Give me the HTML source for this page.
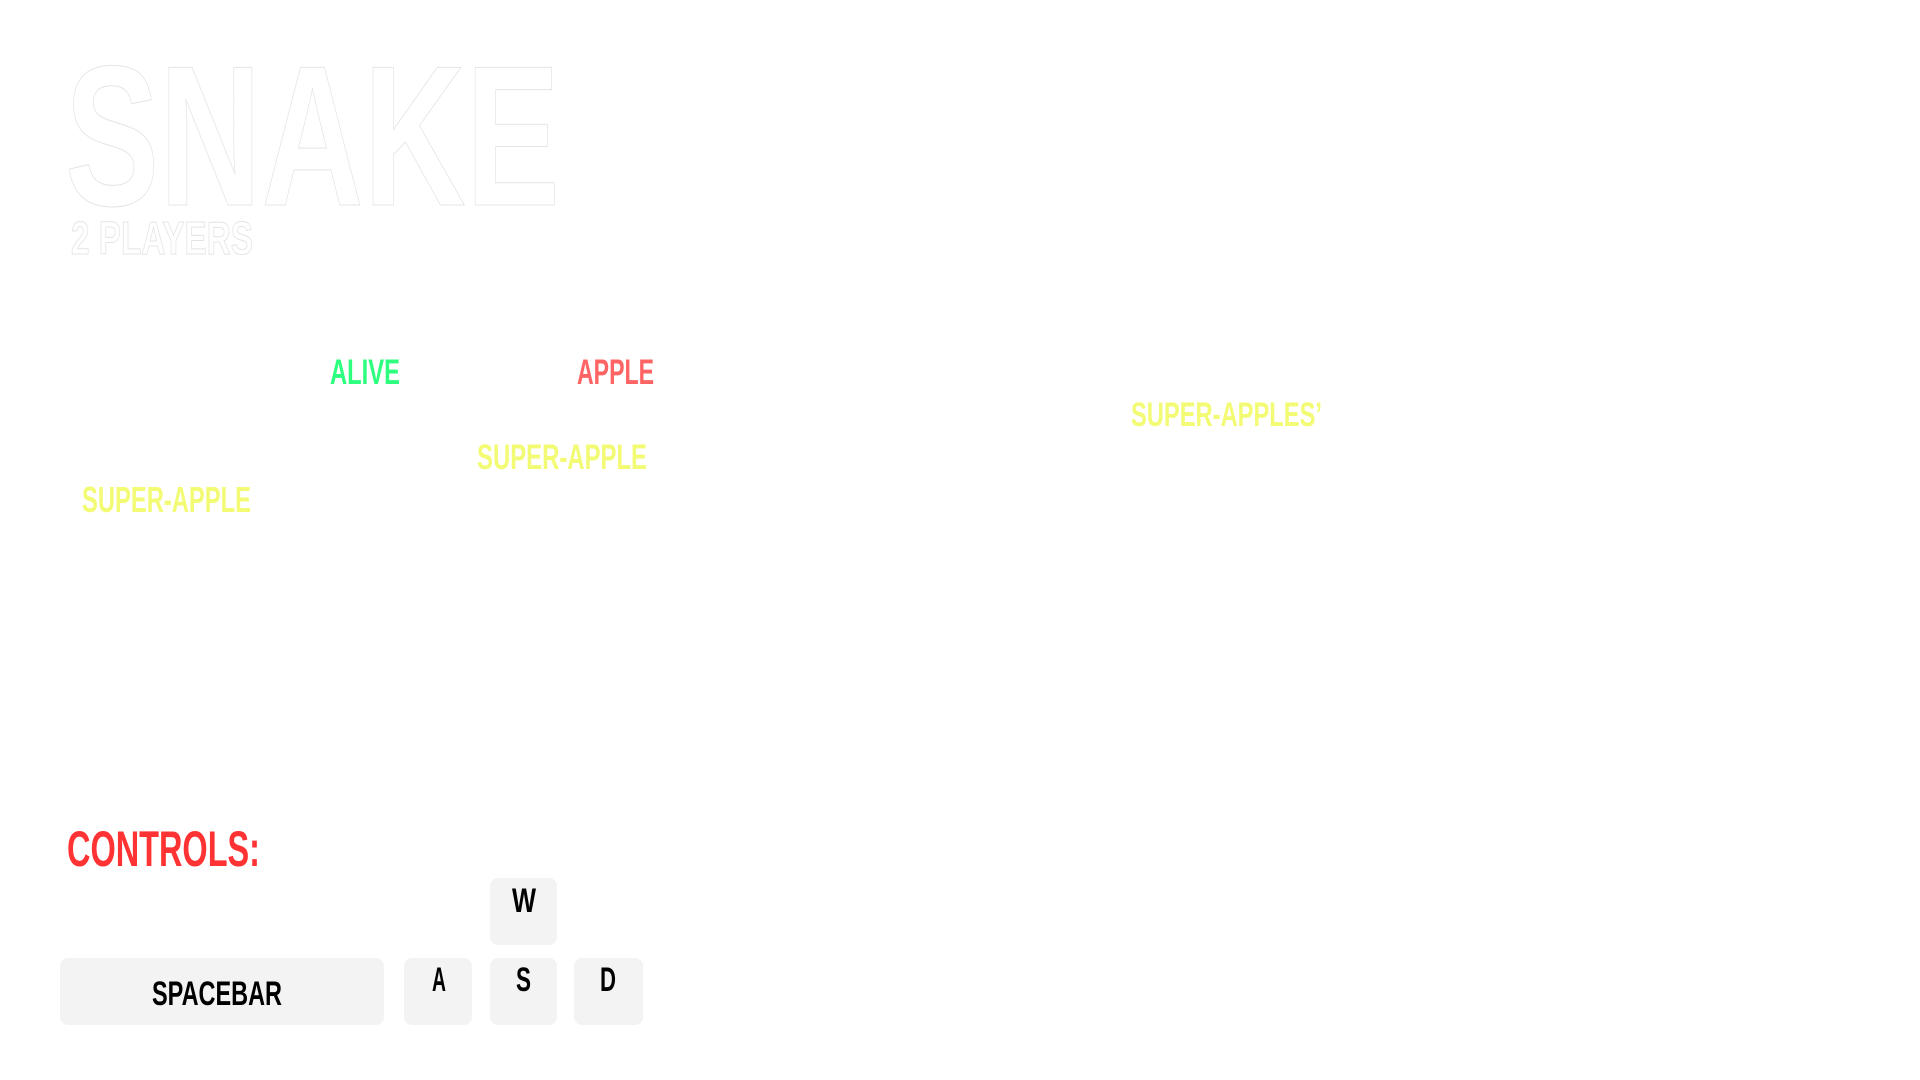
<!DOCTYPE html>
<html><head><meta charset="utf-8"><style>
html,body{margin:0;padding:0;background:#fff;width:1920px;height:1080px;overflow:hidden}
svg{display:block}
text{font-family:"Liberation Sans",sans-serif;font-weight:bold}
</style></head><body>
<svg width="1920" height="1080" viewBox="0 0 1920 1080">
<text x="65" y="205" font-size="200" textLength="495" lengthAdjust="spacingAndGlyphs" fill="#fff" stroke="#e4e4e4" stroke-width="1">SNAKE</text>
<text x="71" y="254" font-size="46" textLength="182" lengthAdjust="spacingAndGlyphs" fill="#fff" stroke="#e4e4e4" stroke-width="1">2 PLAYERS</text>
<text x="330" y="384" font-size="35" textLength="70" lengthAdjust="spacingAndGlyphs" fill="#2dff7e">ALIVE</text>
<text x="577" y="384" font-size="35" textLength="77" lengthAdjust="spacingAndGlyphs" fill="#ff6464">APPLE</text>
<text x="1131" y="426" font-size="34" textLength="191" lengthAdjust="spacingAndGlyphs" fill="#f2fb73">SUPER-APPLES’</text>
<text x="477" y="469" font-size="35" textLength="170" lengthAdjust="spacingAndGlyphs" fill="#f2fb73">SUPER-APPLE</text>
<text x="82" y="512" font-size="36" textLength="169" lengthAdjust="spacingAndGlyphs" fill="#f2fb73">SUPER-APPLE</text>
<text x="67" y="866" font-size="50" textLength="193" lengthAdjust="spacingAndGlyphs" fill="#ff3333">CONTROLS:</text>
<rect x="490" y="878" width="67" height="67" rx="8" fill="#f3f3f3"/>
<rect x="60" y="958" width="324" height="67" rx="8" fill="#f3f3f3"/>
<rect x="404" y="958" width="68" height="67" rx="8" fill="#f3f3f3"/>
<rect x="490" y="958" width="67" height="67" rx="8" fill="#f3f3f3"/>
<rect x="574" y="958" width="69" height="67" rx="8" fill="#f3f3f3"/>
<text x="512" y="912" font-size="34" textLength="24" lengthAdjust="spacingAndGlyphs" fill="#000">W</text>
<text x="432" y="991" font-size="34" textLength="14" lengthAdjust="spacingAndGlyphs" fill="#000">A</text>
<text x="516" y="991" font-size="34" textLength="15" lengthAdjust="spacingAndGlyphs" fill="#000">S</text>
<text x="600" y="991" font-size="34" textLength="16" lengthAdjust="spacingAndGlyphs" fill="#000">D</text>
<text x="152" y="1005" font-size="34" textLength="130" lengthAdjust="spacingAndGlyphs" fill="#000">SPACEBAR</text>
</svg>
</body></html>
